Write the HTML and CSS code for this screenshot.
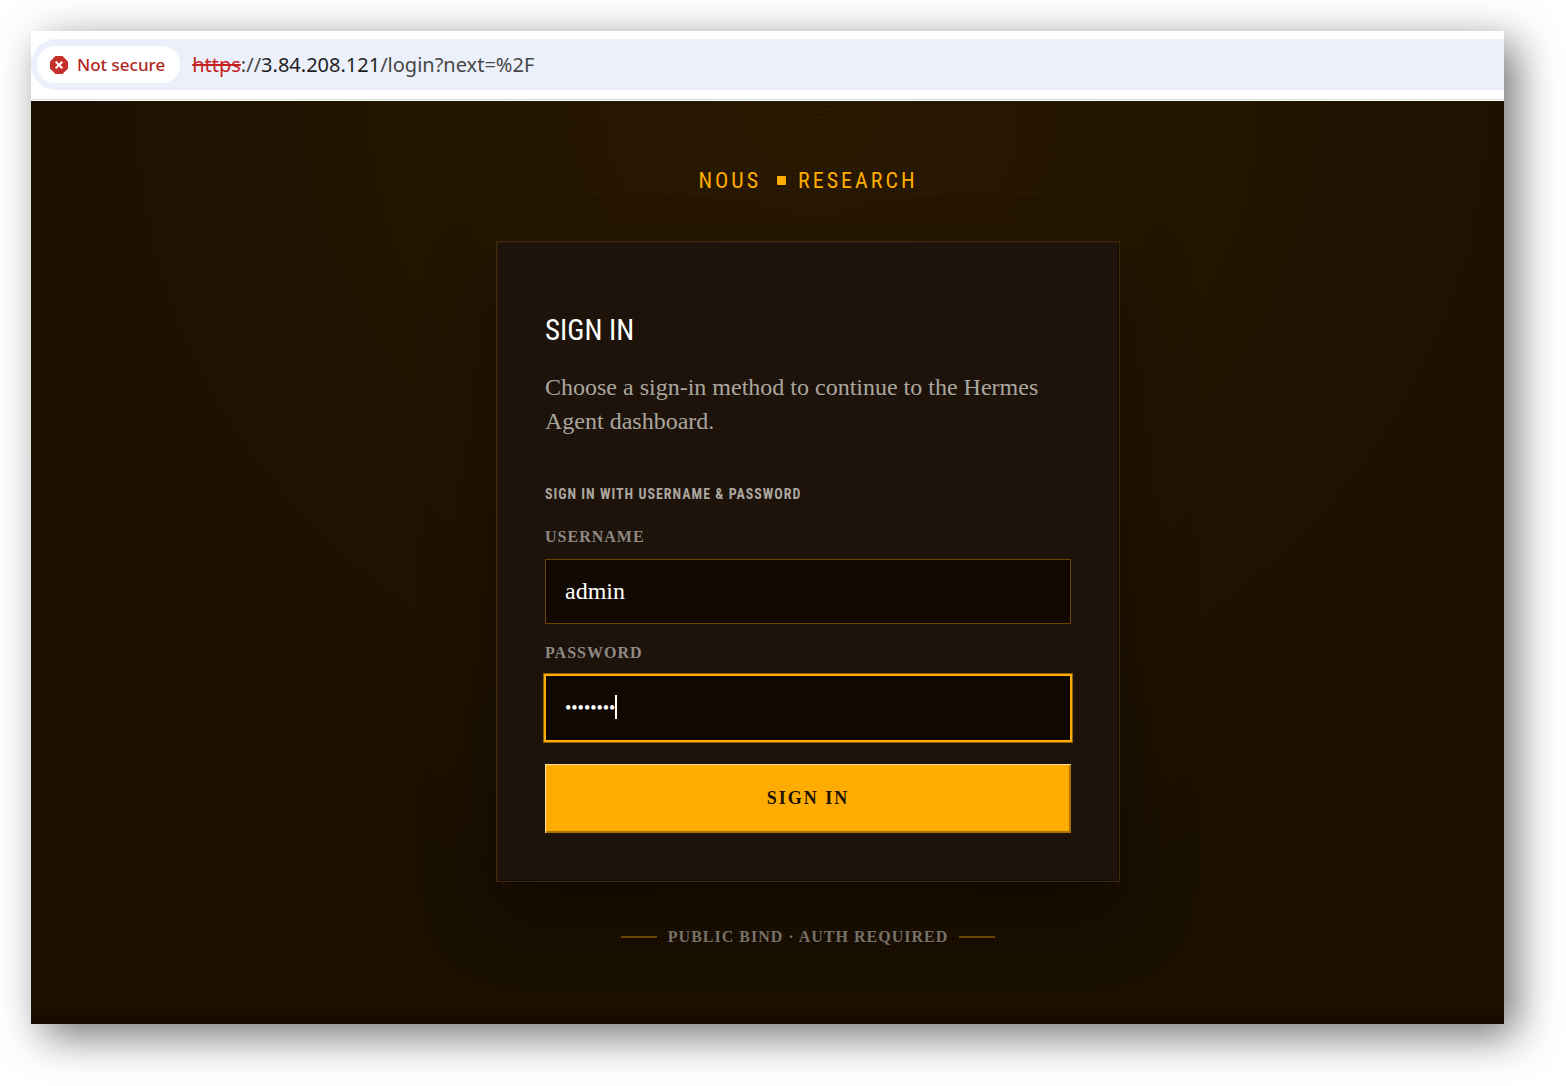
FILE: index.html
```html
<!DOCTYPE html>
<html lang="en">
<head>
<meta charset="UTF-8">
<meta name="viewport" content="width=device-width, initial-scale=1.0">
<title>Sign in</title>
<link rel="stylesheet" href="styles.css">
</head>
<body>
<div class="window">
    <header class="toolbar">
        <div class="address-bar">
            <button class="security" type="button">
                <svg width="18" height="18" viewBox="0 0 18 18" aria-hidden="true">
                    <path d="M5.5 0h7L18 5.5v7L12.5 18h-7L0 12.5v-7z" fill="#c5302a"/>
                    <path d="M5.7 5.7l6.6 6.6M12.3 5.7l-6.6 6.6" stroke="#fff" stroke-width="2"/>
                </svg>
                Not secure
            </button>
            <div class="url"><span class="scheme">https</span>://<span class="host">3.84.208.121</span>/login?next=%2F</div>
        </div>
    </header>
    <main class="page">
        <div class="brand"><span>NOUS</span><i class="brand-dot"></i><span>RESEARCH</span></div>
        <section class="card">
            <h1>SIGN IN</h1>
            <p class="intro">Choose a sign-in method to continue to the Hermes Agent dashboard.</p>
            <form>
                <h2>SIGN IN WITH USERNAME &amp; PASSWORD</h2>
                <label for="username">USERNAME</label>
                <input type="text" id="username" value="admin">
                <label for="password">PASSWORD</label>
                <div class="password-field">
                    <input type="password" id="password" value="password">
                    <span class="caret"></span>
                </div>
                <button class="submit" type="submit">SIGN IN</button>
            </form>
        </section>
        <footer class="note">PUBLIC BIND · AUTH REQUIRED</footer>
    </main>
</div>
</body>
</html>
```
FILE: styles.css
```css
* {
    box-sizing: border-box;
}
body {
    margin: 0;
    min-height: 100vh;
    padding: 31px 62px 62px 31px;
    display: flex;
    background-color: #fff;
    font-family: "Liberation Serif", serif;
}
.window {
    flex: 1;
    display: flex;
    flex-direction: column;
    background-color: #fff;
    box-shadow: 12px 12px 40px rgba(0, 0, 0, 0.55);
}

/* browser bar */
.toolbar {
    padding: 8px 0 9px;
    margin-bottom: 1px;
    border-bottom: 1px solid #d5dddb;
}
.address-bar {
    display: flex;
    align-items: center;
    gap: 12px;
    height: 51px;
    padding-left: 6px;
    background-color: #ecf0fa;
    border-radius: 26px 0 0 26px;
    font-family: "Noto Sans", sans-serif;
}
.security {
    display: flex;
    align-items: center;
    gap: 9px;
    height: 37px;
    padding: 0 15px 0 13px;
    border: none;
    border-radius: 18px;
    background-color: #fff;
    color: #b3261e;
    font: 500 17px "Noto Sans", sans-serif;
}
.url {
    color: #474747;
    font-size: 20px;
}
.scheme {
    color: #c5221f;
    text-decoration: line-through;
}
.host {
    color: #1f1f1f;
}

/* login page */
.page {
    flex: 1;
    display: flex;
    flex-direction: column;
    align-items: center;
    padding: 62px 0 62px 81px;
    border-bottom: 9px solid #170b02;
    background-color: #1a0f00;
    background-image:
        radial-gradient(circle, rgba(0, 0, 0, 0.2) 1px, transparent 1px),
        radial-gradient(ellipse 60% 90% at 53% 0, #2b1a00, #1c1000);
    background-size: 4px 4px, auto;
}
.brand {
    display: flex;
    align-items: center;
    height: 34px;
    margin-bottom: 44px;
    color: #ffac02;
    font: 22px "Roboto Condensed", sans-serif;
    letter-spacing: 3px;
}
.brand-dot {
    width: 9px;
    height: 9px;
    margin: 0 12px 0 16px;
    border-radius: 1px;
    background-color: #ffac02;
}
.card {
    width: 624px;
    max-width: 100%;
    padding: 56px 48px 48px;
    border: 1px solid #40290a;
    background-color: #1d130a;
    box-shadow: inset 1px 1px 1px #2a1d0c, inset -1px -1px 1px #140b05, 0 32px 64px rgba(0, 0, 0, 0.35);
}
h1 {
    margin: 0 0 8px;
    color: #fff;
    font: 29px/64px "Roboto Condensed", sans-serif;
}
.intro {
    margin: 0 0 44px;
    color: #aba69f;
    font-size: 24px;
    line-height: 34px;
}
form {
    display: flex;
    flex-direction: column;
}
h2 {
    margin: 0 0 17px;
    color: #aba69f;
    font: bold 14px/24px "Roboto Condensed", sans-serif;
    letter-spacing: 1px;
}
label {
    margin-bottom: 8px;
    color: #8e8983;
    font-size: 16px;
    font-weight: bold;
    line-height: 28px;
    letter-spacing: 1px;
}
input {
    width: 100%;
    height: 66px;
    padding: 0 19px;
    border: 1px solid #694400;
    border-radius: 0;
    outline: none;
    background-color: #110802;
    color: #fff;
    font: 24px "Liberation Serif", serif;
}
#username {
    height: 65px;
    margin-bottom: 15px;
}
.password-field {
    position: relative;
    margin-bottom: 23px;
}
#password {
    display: block;
    border-color: #ffac02;
    box-shadow: 0 0 0 1px #ffac02, 0 0 0 2px #8c5e04;
    font-size: 18px;
}
.caret {
    position: absolute;
    top: 20px;
    left: 70px;
    width: 2px;
    height: 24px;
    background-color: #fff;
}
.submit {
    height: 69px;
    border: none;
    background-color: #ffac02;
    box-shadow: inset 1px 1px 1px #ffe2a8, inset -1px -1px 1px 1px #a87000;
    color: #1d1300;
    font: bold 18px "Liberation Serif", serif;
    letter-spacing: 2px;
}
.note {
    display: flex;
    align-items: center;
    gap: 11px;
    margin-top: 41px;
    color: #77716a;
    font-size: 16px;
    font-weight: bold;
    line-height: 28px;
    letter-spacing: 1px;
}
.note::before,
.note::after {
    content: "";
    width: 36px;
    height: 2px;
    background-color: #694400;
}
```
